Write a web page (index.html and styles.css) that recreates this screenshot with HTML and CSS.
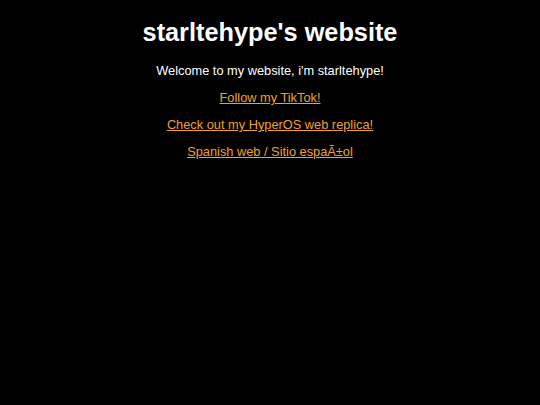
FILE: index.html
```html
<!DOCTYPE html>
<html>
<head>
<meta charset="utf-8">
<title>starltehype's website</title>
<link rel="stylesheet" href="styles.css">
</head>
<body>
<h1 class="title">starltehype's website</h1>
<p class="intro">Welcome to my website, i'm starltehype!</p>
<p class="item"><a class="link" href="#">Follow my TikTok!</a></p>
<p class="item"><a class="link" href="#">Check out my HyperOS web replica!</a></p>
<p class="item"><a class="link" href="#">Spanish web / Sitio espaÃ±ol</a></p>
</body>
</html>
```
FILE: styles.css
```css
html, body {
  background: #000;
}
body {
  margin: 8px;
  color: #fff;
  font-family: "Liberation Sans", Arial, sans-serif;
  text-align: center;
  font-size: 12.8px;
}
.title {
  font-size: 25.3px;
  font-weight: bold;
  margin: 10px 0 16px;
}
.intro, .item {
  margin: 0 0 12px;
}
.link {
  color: #f0a030;
  text-decoration: underline;
}
```
